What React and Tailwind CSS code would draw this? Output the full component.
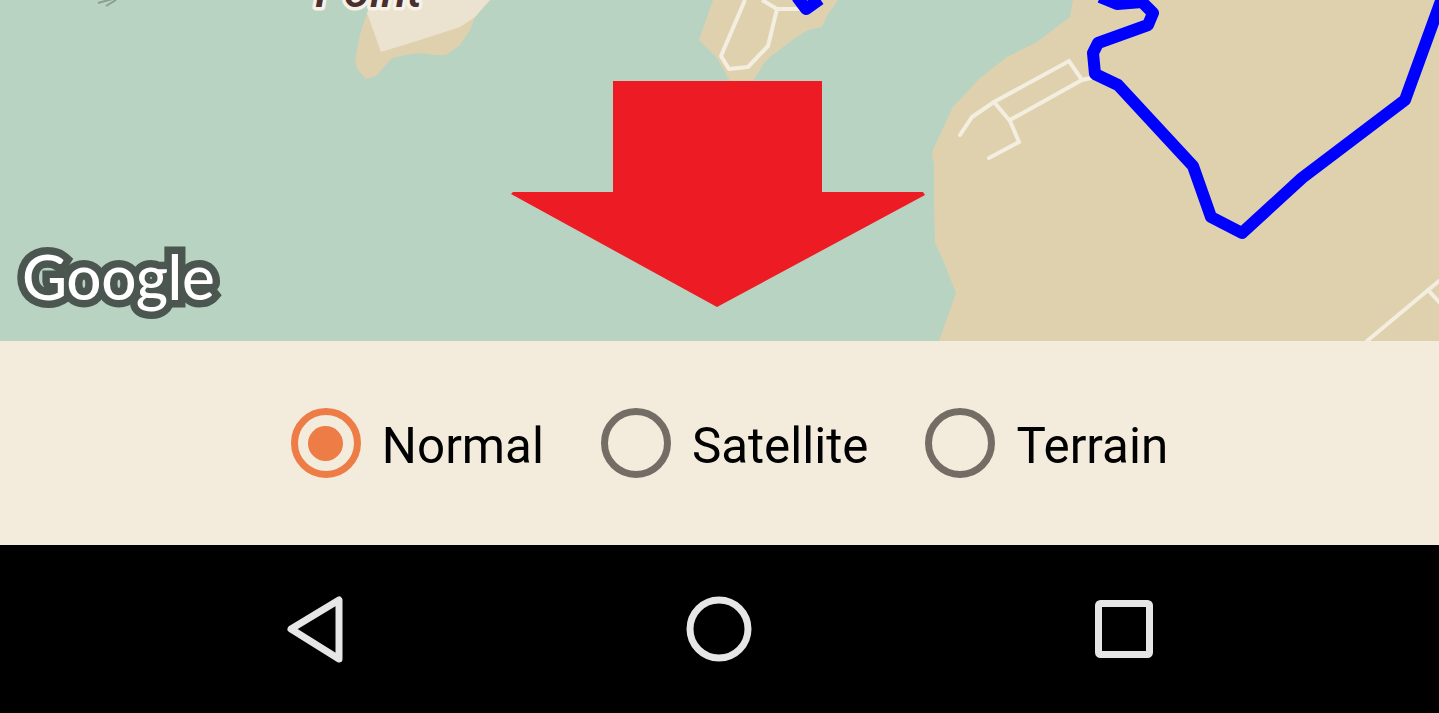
function MapView() {
  return (
    <svg className="block w-full h-full" viewBox="0 0 1439 341">
      <rect width="1439" height="341" fill="#b9d3c2" />

      {/* left island */}
      <path d="M367 13 L360 35 L355 60 L358 70 L366 79 L376 76 L392 58 L405 55 L420 53 L435 55 L446 55 L460 45 L470 30 L475 17 L490 0 L372 0 Z" fill="#dfd1ae" />
      <path d="M367 13 L381 52 L420 40 L460 27 L475 17 L490 0 L372 0 Z" fill="#ebe3cf" />

      {/* center island */}
      <path d="M713 0 L699 40 L717 58 L730 81 L750 85 L765 62 L770 57 L795 38 L808 30 L822 27 L828 14 L838 0 Z" fill="#dfd1ae" />
      <g fill="none" stroke="#f3eee0" strokeWidth="4" strokeLinejoin="round">
        <path d="M745 0 L721 56 L729 69 L748 67 L768 46 L777 9 L800 9" />
        <path d="M762 0 L777 9" />
      </g>
      <path d="M797 -3 L806 9 L820 -1" fill="none" stroke="#0000ff" strokeWidth="12" strokeLinejoin="round" />

      {/* right land */}
      <path d="M1073 0 L1070 17 L1037 42 L1007 57 L980 78 L953 107 L933 150 L932 155 L934 165 L934 198 L935 243 L943 260 L956 293 L939 341 L1439 341 L1439 0 Z" fill="#dfd1ae" />
      <g fill="none" stroke="#f3eee0" strokeWidth="4" strokeLinecap="round" strokeLinejoin="miter">
        <path d="M960 135 L972 117 L994 102 L1069 61 L1082 80" />
        <path d="M994 102 L1010 121 L1019 142 L989 158" />
        <path d="M1010 120 L1082 80 L1091 78" />
        <path d="M1367 341 L1439 281" />
        <path d="M1428 290 L1439 302" />
      </g>
      <path
        d="M1100 -3 L1117 4 L1142 2 L1153 13 L1148 25 L1098 43 L1093 53 L1095 74 L1118 85 L1193 166 L1211 217 L1242 233 L1302 178 L1405 100 L1445 -10"
        fill="none"
        stroke="#0000ff"
        strokeWidth="12"
        strokeLinejoin="round"
      />

      {/* map labels */}
      <path d="M98 3 L116 -2 M106 6 L116 0" stroke="#8d9d92" strokeWidth="2" fill="none" />
      <text
        x="315"
        y="7"
        fontFamily="Roboto, sans-serif"
        fontSize="47"
        fontStyle="italic"
        fontWeight="500"
        fill="#4a2f2f"
        stroke="#f6f2e8"
        strokeWidth="7"
        strokeLinejoin="round"
        className="[paint-order:stroke]"
      >
        Point
      </text>

      {/* google logo */}
      <text
        x="22"
        y="300"
        fontFamily="Lato, sans-serif"
        fontSize="62"
        fontWeight="500"
        letterSpacing="-0.5"
        fill="#ffffff"
        stroke="#4b5650"
        strokeWidth="15"
        strokeLinejoin="miter"
        className="[paint-order:stroke]"
      >
        Google
      </text>

      {/* arrow */}
      <path d="M613 81 L822 81 L822 192 L923 192 L925 195 L717 307 L511 194 L513 192 L613 192 Z" fill="#ed1c24" />
    </svg>
  )
}

function Radio({ label, checked }) {
  return (
    <div className="flex items-center gap-[21px]">
      {checked ? (
        <span className="flex items-center justify-center w-[70px] h-[70px] rounded-full border-[7px] border-[#ee7c46]">
          <span className="w-[35px] h-[35px] rounded-full bg-[#ee7c46]" />
        </span>
      ) : (
        <span className="w-[70px] h-[70px] rounded-full border-[7px] border-[#736d65]" />
      )}
      <span className="pt-[5px] text-[49.3px] leading-[56px] text-black font-['Roboto',sans-serif]">{label}</span>
    </div>
  )
}

function NavBar() {
  return (
    <div className="flex items-center gap-[324px] pl-[275px] h-[168px] bg-black">
      <svg className="w-20 h-20" viewBox="0 0 80 80" fill="none" stroke="#e6e6e6" strokeWidth="7" strokeLinejoin="round">
        <path d="M16 40 L64 11 L64 70 Z" />
      </svg>
      <svg className="w-20 h-20" viewBox="0 0 80 80" fill="none" stroke="#e6e6e6" strokeWidth="7">
        <circle cx="40" cy="40" r="29" />
      </svg>
      <svg className="w-20 h-20" viewBox="0 0 80 80" fill="none" stroke="#e6e6e6" strokeWidth="7">
        <rect x="15.5" y="14.5" width="51" height="51" rx="2" />
      </svg>
    </div>
  )
}

export default function App() {
  return (
    <div className="flex flex-col w-[1439px] h-[713px] overflow-hidden">
      <div className="h-[341px]">
        <MapView />
      </div>
      <div className="flex items-center justify-center gap-[57px] pl-[20px] h-[204px] bg-[#f3ebdb]">
        <Radio label="Normal" checked />
        <Radio label="Satellite" />
        <Radio label="Terrain" />
      </div>
      <NavBar />
    </div>
  )
}
